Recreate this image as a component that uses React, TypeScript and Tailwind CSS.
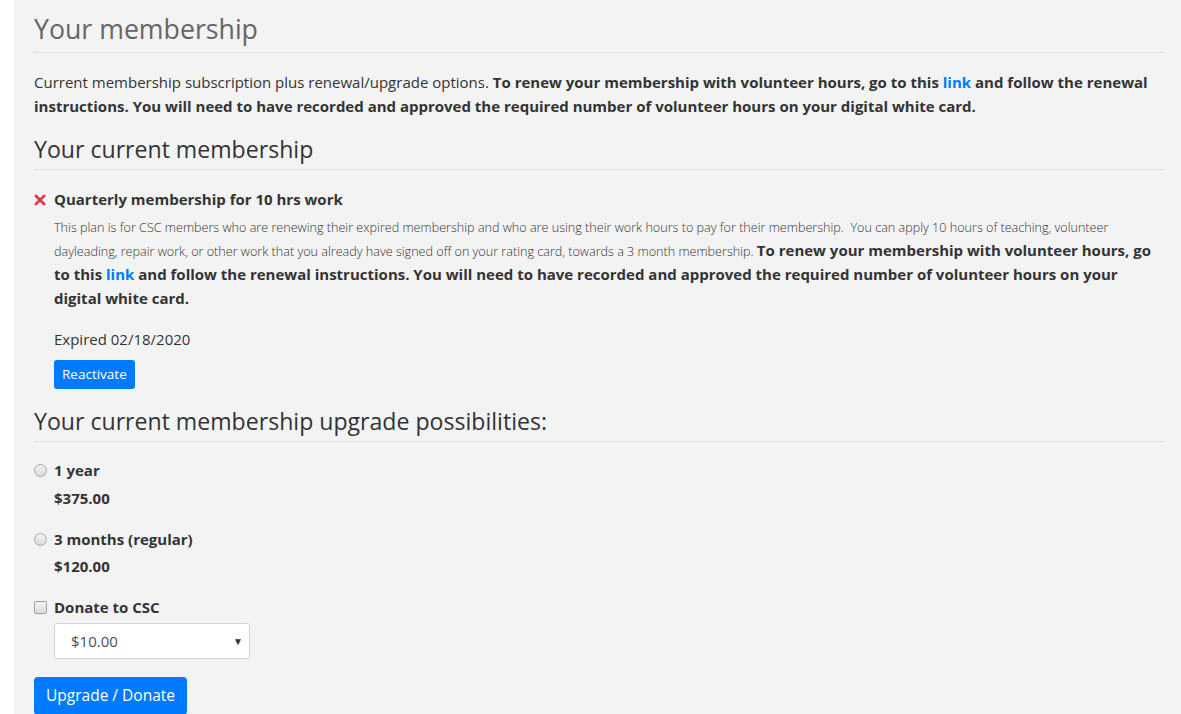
import React from "react";

const font = { fontFamily: '"Open Sans", "Noto Sans", sans-serif' };

function Radio() {
  return (
    <span className="mt-[6px] inline-block h-[13px] w-[13px] shrink-0 rounded-full border border-[#a9a9a9] bg-gradient-to-b from-[#f4f4f4] to-[#d8d8d8]" />
  );
}

function Checkbox() {
  return (
    <span className="mt-[6px] inline-block h-[13px] w-[13px] shrink-0 rounded-[2px] border border-[#a0a0a0] bg-gradient-to-b from-[#f4f4f4] to-[#dcdcdc]" />
  );
}

export default function App() {
  return (
    <div className="min-h-[714px] bg-white" style={font}>
      <div className="ml-[14px] min-h-[714px] bg-[#f3f3f3] pl-5 pr-[17px] pt-[12px] text-[#333]">
        <h1 className="border-b border-[#dfe1e4] pb-[6px] text-[26.7px] leading-[34px] text-[#666]">
          Your membership
        </h1>
        <p className="mt-[17px] text-[15px] leading-[24px]">
          Current membership subscription plus renewal/upgrade options.{" "}
          <b>
            To renew your membership with volunteer hours, go to this{" "}
            <a className="text-[#007bff]">link</a> and follow the renewal instructions. You
            will need to have recorded and approved the required number of volunteer hours on
            your digital white card.
          </b>
        </p>

        <h2 className="mt-[18px] border-b border-[#dfe1e4] pb-[7px] text-[23.1px] leading-[26px]">
          Your current membership
        </h2>

        <div className="mt-[17px] flex gap-[8px]">
          <svg width="12" height="12" viewBox="0 0 12 12" className="mt-[7px] shrink-0">
            <path d="M2 2 L10 10 M10 2 L2 10" stroke="#dc3545" strokeWidth="2.6" strokeLinecap="square" />
          </svg>
          <div className="min-w-0 flex-1">
            <div className="text-[15px] font-bold leading-[24px]">
              Quarterly membership for 10 hrs work
            </div>
            <p className="mt-[5px] text-[12.6px] font-light leading-[23px]">
              This plan is for CSC members who are renewing their expired membership and who are
              using their work hours to pay for their membership.&nbsp; You can apply 10 hours of
              teaching, volunteer dayleading, repair work, or other work that you already have
              signed off on your rating card, towards a 3 month membership.{" "}
              <b className="text-[15px] font-bold leading-[23px]">
                To renew your membership with volunteer hours, go to this{" "}
                <a className="text-[#007bff]">link</a> and follow the renewal instructions. You
                will need to have recorded and approved the required number of volunteer hours on
                your digital white card.
              </b>
            </p>
            <div className="mt-[16px] text-[15px] leading-[24px]">Expired 02/18/2020</div>
            <button className="mt-[9px] block h-[29px] rounded-[3px] bg-[#007bff] px-[8px] text-[13.5px] text-white">
              Reactivate
            </button>
          </div>
        </div>

        <h2 className="mt-[19px] border-b border-[#dfe1e4] pb-[7px] text-[23.1px] leading-[26px]">
          Your current membership upgrade possibilities:
        </h2>

        <div className="mt-[16px] flex gap-[7px]">
          <Radio />
          <div className="text-[15px] font-bold leading-[24px]">
            <div>1 year</div>
            <div className="mt-[4px]">$375.00</div>
          </div>
        </div>
        <div className="mt-[17px] flex gap-[7px]">
          <Radio />
          <div className="text-[15px] font-bold leading-[24px]">
            <div>3 months (regular)</div>
            <div className="mt-[3px]">$120.00</div>
          </div>
        </div>
        <div className="mt-[17px] flex gap-[7px]">
          <Checkbox />
          <div className="text-[15px] font-bold leading-[24px]">Donate to CSC</div>
        </div>
        <div className="mt-[4px] pl-[20px]">
          <div className="flex h-[36px] w-[196px] items-center justify-between rounded-[3px] border border-[#ced4da] bg-white pl-[16px] pr-[6px] text-[15px] text-[#495057]">
            <span>$10.00</span>
            <span className="text-[10px] text-[#333]">▼</span>
          </div>
        </div>
        <button className="mt-[18px] block h-[38px] rounded-[4px] bg-[#007bff] px-[12px] text-[15.5px] text-white">
          Upgrade / Donate
        </button>
      </div>
    </div>
  );
}
